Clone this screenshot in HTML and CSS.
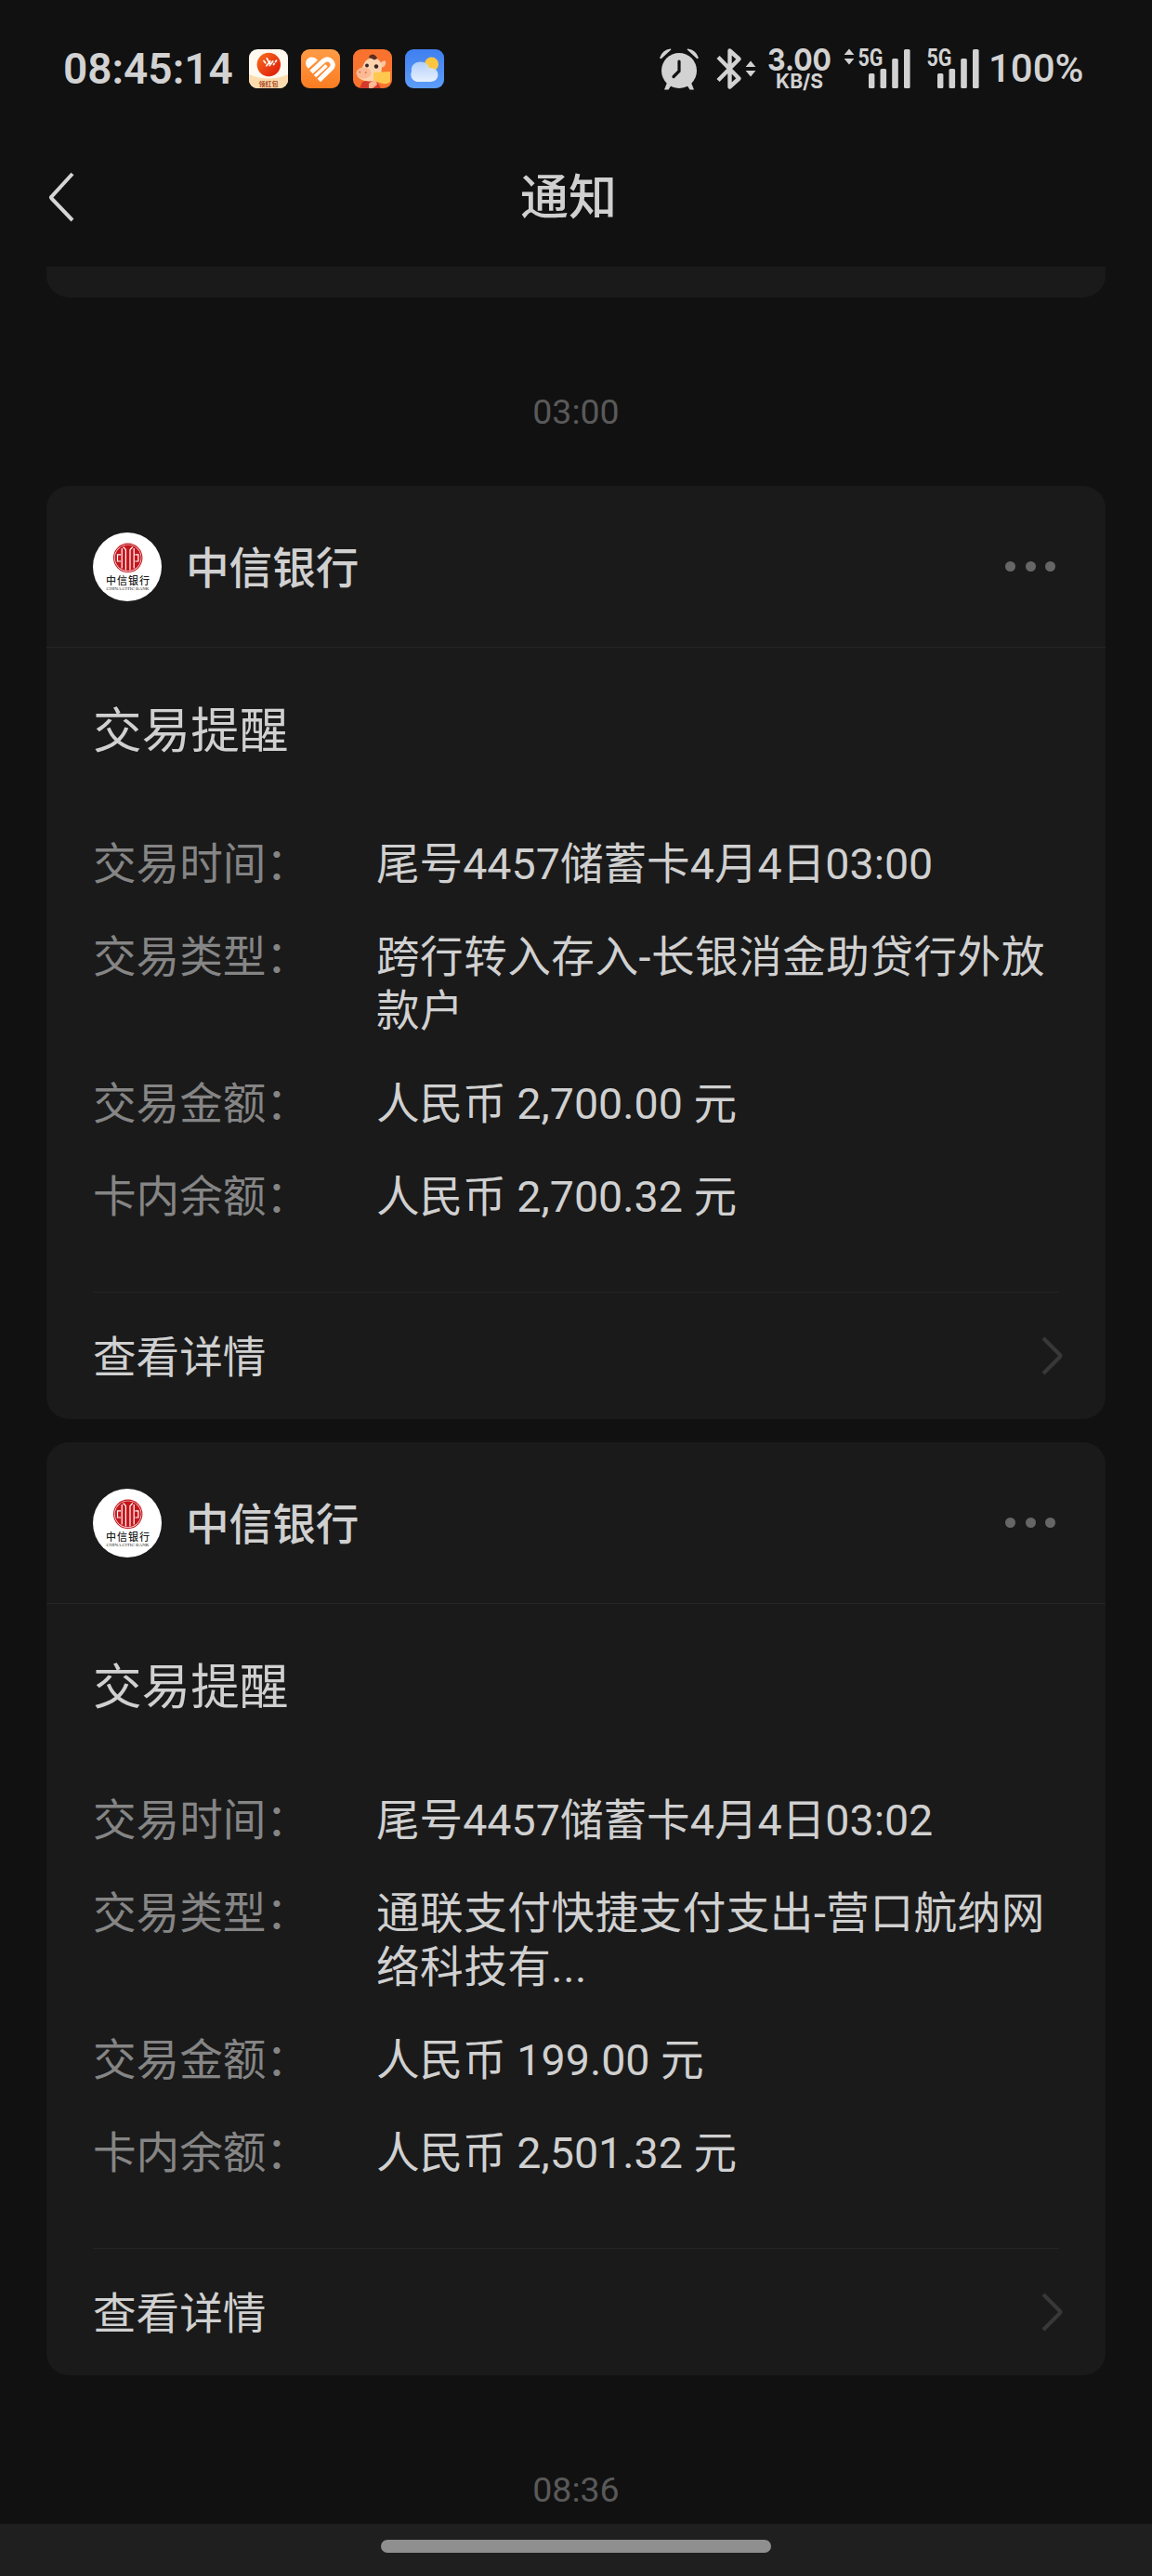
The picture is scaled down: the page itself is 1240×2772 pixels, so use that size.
FILE: index.html
```html
<!DOCTYPE html>
<html lang="zh-CN">
<head>
  <meta charset="UTF-8" />
  <meta name="viewport" content="width=device-width, initial-scale=1.0"/>
  <title>通知</title>
  <link rel="stylesheet" href="styles.css">
</head>
<body>

<!-- Shared symbols -->
<svg class="defs" width="0" height="0">
  <symbol id="emblem" viewBox="0 0 74 74">
    <circle cx="37" cy="37" r="37" fill="#fff"/>
    <circle cx="37.7" cy="27.3" r="15.2" fill="none" stroke="#c4161c" stroke-width="1.1"/>
    <circle cx="37.7" cy="27.3" r="14" fill="#c4161c"/>
    <g fill="none" stroke="#fff" stroke-width="1.2">
      <path d="M30 23.8H26.5V31H30M45.400 23.800h3.500V31h-3.500"/>
      <path d="M31.200 17v21.500M44.200 17v21.500"/>
      <path d="M32.600 15.500l2.800 3v22M42.800 15.500l-2.800 3v22"/>
    </g>
  </symbol>
  <symbol id="bars" viewBox="0 0 74 44">
    <rect x="27" y="27" width="6.4" height="16" rx="1.6"/>
    <rect x="39.5" y="22" width="6.6" height="21" rx="1.6"/>
    <rect x="52.2" y="11" width="6.6" height="32" rx="1.6"/>
    <rect x="65" y="1" width="6.6" height="42" rx="1.6"/>
  </symbol>
  <symbol id="arrows" viewBox="0 0 12 18">
    <path d="M6 .6L11.4 6.9H.6zM6 17.4L.6 11.1h10.8z"/>
  </symbol>
</svg>

<!-- Status bar -->
<div class="status">
  <span class="clock">08:45:14</span>
  <div class="apps">
    <svg width="42" height="42" viewBox="0 0 42 42">
      <defs>
        <linearGradient id="ball" x1="0" y1="0" x2="1" y2="1">
          <stop offset="0" stop-color="#f9711f"/><stop offset="1" stop-color="#dc1408"/>
        </linearGradient>
      </defs>
      <rect width="42" height="42" rx="9" fill="#fffaf0"/>
      <path d="M0 27q21 9 42 0v6a9 9 0 0 1-9 9H9a9 9 0 0 1-9-9z" fill="#fbdcae"/>
      <circle cx="21.3" cy="16.5" r="12.7" fill="url(#ball)"/>
      <path d="M16 12.5l1.7 2.3M19.2 9.8l3.2 5.4M18.8 17.8l4.2-5M22.2 17.5l3.6-4.6M26.5 16.5l.6-1M28.6 13.5l1-1.4" stroke="#fff" stroke-width="1.7" stroke-linecap="round"/>
      <text class="app-label" x="21" y="39.6" text-anchor="middle">领红包</text>
    </svg>
    <svg width="42" height="42" viewBox="0 0 42 42">
      <defs>
        <linearGradient id="orange" x1="0" y1="0" x2="0" y2="1">
          <stop offset="0" stop-color="#ff9c46"/><stop offset="1" stop-color="#fb7c22"/>
        </linearGradient>
      </defs>
      <rect width="42" height="42" rx="9" fill="url(#orange)"/>
      <path d="M7.800 20.800Q4.500 17.500 5.200 13.500 6.500 9 11 8.500q4-.3 7 3.200z" fill="#fff"/>
      <path d="M11 24.500L24.500 12.300q4.500-3 8 .5 3.500 4 0 7.700L19.300 33.500" fill="none" stroke="#fff" stroke-width="5"/>
      <path d="M15 29L27.500 17.500" stroke="#fff" stroke-width="3.600"/>
    </svg>
    <svg width="42" height="42" viewBox="0 0 42 42">
      <rect width="42" height="42" rx="9" fill="#f9732e"/>
      <path d="M7 42l3-7q8-3 16 0l4 7z" fill="#d43a2c"/>
      <path d="M28 15l6-3q3 3-1 7l-4 1z" fill="#fbc7a0"/>
      <path d="M12 15q3-6 10-5.500 9 .5 9 10.500l-1 8q-4 7-13 6.500-12-1-13-8 0-5 6-7z" fill="#fdd3ae"/>
      <path d="M17 9q0-3 4-3.500 4 .5 5 4.500l-3 1.500-3-1.500z" fill="#5b2f22"/>
      <ellipse cx="11.500" cy="25.500" rx="8" ry="6" fill="#fcb994"/>
      <circle cx="15" cy="17.500" r="1.900" fill="#3a2320"/>
      <circle cx="25" cy="18.500" r="2.200" fill="#3a2320"/>
      <path d="M6.500 24l1.500 1M13 25.500l1.500-1" stroke="#bd6543" stroke-width="1.300"/>
      <path d="M22 25l18-1v11q-3 3-8 2l-10-3z" fill="#ffc94f"/>
      <path d="M17 37q5-5 8-3l1 4-5 4h-4z" fill="#fcb994"/>
    </svg>
    <svg width="42" height="42" viewBox="0 0 42 42">
      <defs>
        <linearGradient id="sky" x1="0" y1="0" x2="0" y2="1">
          <stop offset="0" stop-color="#3f7ff0"/><stop offset="1" stop-color="#5d9df8"/>
        </linearGradient>
        <linearGradient id="cloud" x1="0" y1="0" x2="0" y2="1">
          <stop offset="0" stop-color="#b9d5fb"/><stop offset="1" stop-color="#f2f7ff"/>
        </linearGradient>
      </defs>
      <rect width="42" height="42" rx="9" fill="url(#sky)"/>
      <circle cx="28.500" cy="16" r="7.500" fill="#fdc63e"/>
      <path d="M13 35a7.800 7.800 0 0 1-6-11q-1-10 10-10.500 7 0 9 6.500 9 0 9.500 7 0 7-8 8z" fill="url(#cloud)" fill-opacity=".93"/>
    </svg>
  </div>

  <div class="indicators">
    <svg width="44" height="46" viewBox="0 0 44 46">
      <circle cx="22" cy="25" r="19"/>
      <path d="M1.200 11Q4 2.500 12.500 1.500q1 0 .8 1L3 12q-1.800.6-1.800-1zM42.800 11Q40 2.500 31.500 1.500q-1 0-.8 1L41 12q1.800.6 1.800-1z"/>
      <path d="M9 38l-3 7.500h4.500L14 40zM35 38l3 7.500h-4.500L30 40z"/>
      <path d="M22 15v10.500l-6 6" fill="none" stroke="#111" stroke-width="3.200" stroke-linecap="round"/>
    </svg>
    <svg class="bluetooth" width="28" height="46" viewBox="0 0 28 46">
      <path d="M2 10.500L24.500 33.500 14.500 42.500V3.500L24.500 12.500 2 35.500" fill="none" stroke="#d2d2d2" stroke-width="4.400" stroke-linejoin="round"/>
    </svg>
    <svg class="bt-arrows" width="12" height="18"><use href="#arrows"/></svg>
    <svg class="speed" width="70" height="46" viewBox="0 0 70 46">
      <text class="speed-num" x="0" y="25" textLength="69" lengthAdjust="spacingAndGlyphs">3.00</text>
      <text class="speed-unit" x="9" y="43.500" textLength="51" lengthAdjust="spacingAndGlyphs">KB/S</text>
    </svg>
    <svg class="net" width="74" height="44" viewBox="0 0 74 44">
      <use href="#arrows" x="0" y="0" width="12" height="18"/>
      <text class="net-type" x="15.500" y="19" textLength="27" lengthAdjust="spacingAndGlyphs">5G</text>
      <use href="#bars"/>
    </svg>
    <svg class="net" width="74" height="44" viewBox="0 0 74 44">
      <text class="net-type" x="15.500" y="19" textLength="27" lengthAdjust="spacingAndGlyphs">5G</text>
      <use href="#bars"/>
    </svg>
    <span class="battery">100%</span>
  </div>
</div>

<!-- Title bar -->
<div class="navbar">
  <svg class="back" width="32" height="56" viewBox="0 0 32 56">
    <path d="M28 3L5.500 27.500q-1 1 0 2L28 53" fill="none" stroke="#d5d5d5" stroke-width="4"/>
  </svg>
  <h1>通知</h1>
</div>

<!-- Message list -->
<div class="messages">
  <div class="card-tail"></div>
  <div class="time">03:00</div>

  <div class="card">
    <div class="card-head">
      <svg width="74" height="74" viewBox="0 0 74 74">
        <use href="#emblem"/>
        <text class="logo-cn" x="37.500" y="55.500" textLength="47" text-anchor="middle">中信银行</text>
        <text class="logo-en" x="37.500" y="62.300" textLength="46" lengthAdjust="spacingAndGlyphs" text-anchor="middle">CHINA CITIC BANK</text>
      </svg>
      <span class="name">中信银行</span>
      <div class="more"><i></i><i></i><i></i></div>
    </div>
    <div class="card-body">
      <h2>交易提醒</h2>
      <dl>
        <dt>交易时间：</dt><dd>尾号4457储蓄卡4月4日03:00</dd>
        <dt>交易类型：</dt><dd class="long">跨行转入存入-长银消金助贷行外放<br>款户</dd>
        <dt>交易金额：</dt><dd>人民币 2,700.00 元</dd>
        <dt>卡内余额：</dt><dd>人民币 2,700.32 元</dd>
      </dl>
    </div>
    <div class="card-foot">
      <span>查看详情</span>
      <svg width="24" height="42" viewBox="0 0 24 42"><path d="M2 2L20 20q1 1 0 2L2 40"/></svg>
    </div>
  </div>

  <div class="card">
    <div class="card-head">
      <svg width="74" height="74" viewBox="0 0 74 74">
        <use href="#emblem"/>
        <text class="logo-cn" x="37.500" y="55.500" textLength="47" text-anchor="middle">中信银行</text>
        <text class="logo-en" x="37.500" y="62.300" textLength="46" lengthAdjust="spacingAndGlyphs" text-anchor="middle">CHINA CITIC BANK</text>
      </svg>
      <span class="name">中信银行</span>
      <div class="more"><i></i><i></i><i></i></div>
    </div>
    <div class="card-body">
      <h2>交易提醒</h2>
      <dl>
        <dt>交易时间：</dt><dd>尾号4457储蓄卡4月4日03:02</dd>
        <dt>交易类型：</dt><dd class="long">通联支付快捷支付支出-营口航纳网<br>络科技有...</dd>
        <dt>交易金额：</dt><dd>人民币 199.00 元</dd>
        <dt>卡内余额：</dt><dd>人民币 2,501.32 元</dd>
      </dl>
    </div>
    <div class="card-foot">
      <span>查看详情</span>
      <svg width="24" height="42" viewBox="0 0 24 42"><path d="M2 2L20 20q1 1 0 2L2 40"/></svg>
    </div>
  </div>

  <div class="time last">08:36</div>
</div>

<!-- Gesture bar -->
<div class="gesture"><div class="pill"></div></div>

</body>
</html>
```
FILE: styles.css
```css
* {
  box-sizing: border-box;
}

body {
  margin: 0;
  width: 1240px;
  height: 2772px;
  display: flex;
  flex-direction: column;
  background: #111;
  color: #d0d0d0;
  font-family: Roboto, "Noto Sans CJK SC", sans-serif;
  overflow: hidden;
}

svg {
  display: block;
  flex: none;
  overflow: visible;
}

.defs {
  position: absolute;
}

/* status bar */
.status {
  height: 148px;
  padding: 0 75px 0 68px;
  display: flex;
  align-items: center;
  color: #d2d2d2;
}

.clock {
  width: 200px;
  font-size: 46px;
  font-weight: 600;
  line-height: 56px;
  white-space: nowrap;
}

.apps {
  display: flex;
  gap: 14px;
}

.app-label {
  font: bold 7px "Noto Sans CJK SC", sans-serif;
  fill: #a8481a;
}

.indicators {
  margin-left: auto;
  display: flex;
  align-items: center;
  fill: #d2d2d2;
}

.bluetooth {
  margin-left: 18px;
}

.bt-arrows {
  margin-left: 3px;
}

.speed {
  margin-left: 12px;
}

.speed-num {
  font: bold 33px Inter, sans-serif;
}

.speed-unit {
  font: bold 21px Inter, sans-serif;
}

.net {
  margin-left: 12px;
}

.net + .net {
  margin-left: 0;
}

.net-type {
  font: bold 25px Roboto, sans-serif;
}

.battery {
  margin-left: 8px;
  width: 101px;
  font-size: 42px;
  font-weight: 500;
  line-height: 50px;
}

/* title bar */
.navbar {
  height: 139px;
  padding-left: 50px;
  display: flex;
  align-items: flex-start;
}

.back {
  margin-top: 36px;
}

.navbar h1 {
  margin: 36px 0 0 478px;
  font-size: 52px;
  font-weight: 500;
  line-height: 60px;
}

/* list */
.messages {
  flex: 1;
  padding: 0 50px;
  overflow: hidden;
}

.card-tail {
  height: 33px;
  border-radius: 0 0 24px 24px;
  background: #1a1a1a;
}

.time {
  height: 203px;
  padding-top: 100px;
  color: #595959;
  font-size: 37.5px;
  line-height: 46px;
  text-align: center;
}

.card {
  height: 1004px;
  margin-bottom: 25px;
  border-radius: 24px;
  background: #1a1a1a;
  display: flex;
  flex-direction: column;
}

.card-head {
  height: 174px;
  padding: 0 54px 0 50px;
  border-bottom: 1px solid #252525;
  display: flex;
  align-items: center;
}

.name {
  margin-left: 26px;
  padding-top: 5px;
  font-size: 46.6px;
  font-weight: 500;
  line-height: 58px;
}

.more {
  margin-left: auto;
  display: flex;
  gap: 10.5px;
}

.more i {
  width: 11px;
  height: 11px;
  border-radius: 50%;
  background: #666;
}

.card-body {
  flex: 1;
  margin: 0 50px;
  padding-top: 60px;
  border-bottom: 1px solid #252525;
}

.card-body h2 {
  margin: 0 0 84px;
  font-size: 52.6px;
  font-weight: 400;
  line-height: 60px;
}

dl {
  margin: 0;
  display: grid;
  grid-template-columns: 305px 1fr;
  row-gap: 42px;
  font-size: 46.6px;
  line-height: 58px;
  white-space: nowrap;
}

dt {
  color: #858585;
}

dd {
  margin: 0;
}

.long {
  letter-spacing: 0.5px;
}

.card-foot {
  height: 136px;
  padding: 0 45px 0 50px;
  display: flex;
  align-items: center;
  justify-content: space-between;
  font-size: 46.6px;
  line-height: 58px;
}

.card-foot span {
  padding-top: 4px;
}

.card-foot path {
  fill: none;
  stroke: #383838;
  stroke-width: 4;
}

.last {
  padding-top: 75px;
}

/* logo lettering */
.logo-cn {
  font: 500 11px "Noto Sans CJK SC", sans-serif;
  fill: #222;
}

.logo-en {
  font: 5px "Liberation Serif", serif;
  fill: #222;
}

/* gesture bar */
.gesture {
  height: 56px;
  padding-top: 17px;
  background: #1f1f1f;
}

.pill {
  width: 420px;
  height: 14px;
  margin: 0 auto;
  border-radius: 7px;
  background: #8f8f8f;
}
```
